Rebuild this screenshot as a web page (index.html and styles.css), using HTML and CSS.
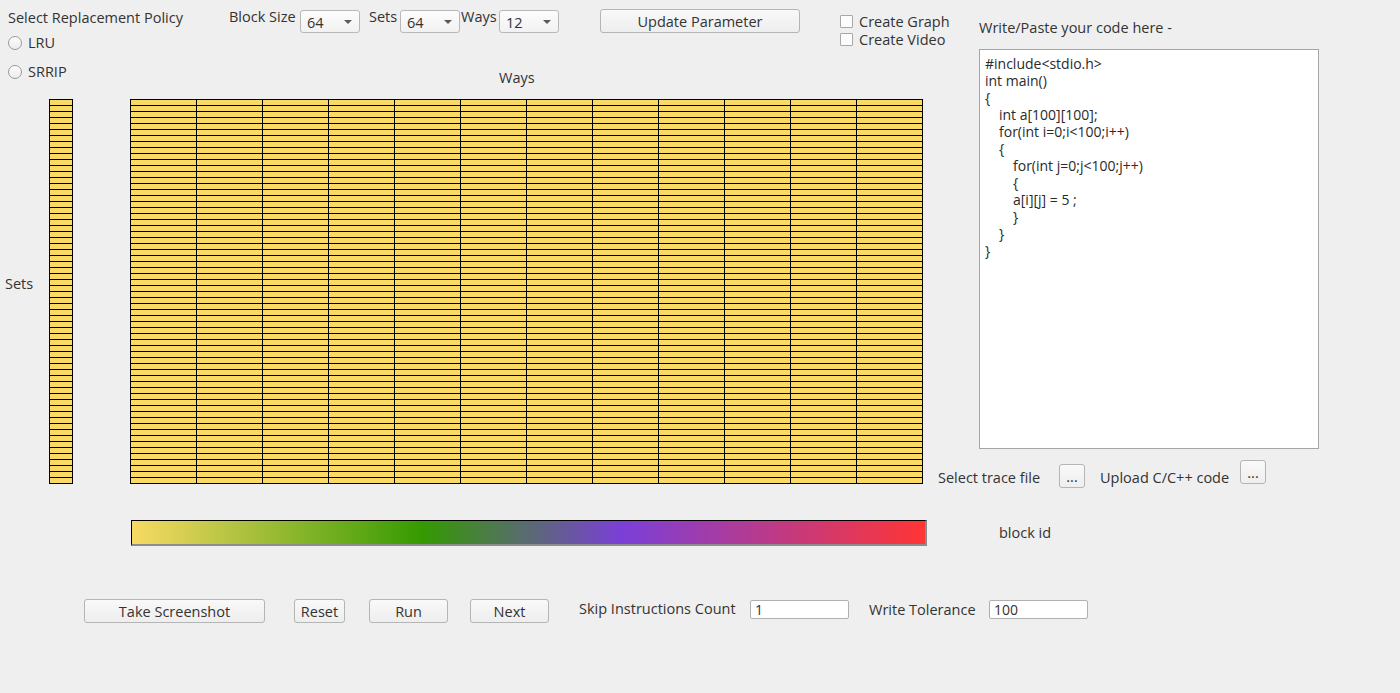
FILE: index.html
```html
<!DOCTYPE html>
<html lang="en">
<head>
<meta charset="utf-8">
<title>Cache Simulator</title>
<link rel="stylesheet" href="styles.css">
</head>
<body>
<div class="window">
  <div class="upper">
    <div class="main">
      <div class="top">
        <div class="policy">
          <div class="title">Select Replacement Policy</div>
          <label class="radio"><span class="rb"></span>LRU</label>
          <label class="radio"><span class="rb"></span>SRRIP</label>
        </div>
        <div class="params">
          <div class="controls">
            <span class="lbl lbl-block">Block Size</span>
            <div class="combo">64<span class="arrow"></span></div>
            <span class="lbl lbl-sets">Sets</span>
            <div class="combo">64<span class="arrow"></span></div>
            <span class="lbl lbl-ways">Ways</span>
            <div class="combo">12<span class="arrow"></span></div>
            <button class="btn update">Update Parameter</button>
            <div class="checks">
              <label class="check"><span class="cb"></span>Create Graph</label>
              <label class="check"><span class="cb"></span>Create Video</label>
            </div>
          </div>
          <div class="axis-ways">Ways</div>
        </div>
      </div>
      <div class="cache">
        <div class="axis-sets">Sets</div>
        <div class="sets-col"></div>
        <div class="ways-grid"></div>
      </div>
    </div>
    <div class="side">
      <div class="code-label">Write/Paste your code here -</div>
      <div class="code">
        <div class="ln">#include&lt;stdio.h&gt;</div>
        <div class="ln">int main()</div>
        <div class="ln">{</div>
        <div class="ln i1">int a[100][100];</div>
        <div class="ln i1">for(int i=0;i&lt;100;i++)</div>
        <div class="ln i1">{</div>
        <div class="ln i2">for(int j=0;j&lt;100;j++)</div>
        <div class="ln i2">{</div>
        <div class="ln i2">a[i][j] = 5 ;</div>
        <div class="ln i2">}</div>
        <div class="ln i1">}</div>
        <div class="ln">}</div>
      </div>
      <div class="trace">
        <span class="lbl lbl-trace">Select trace file</span>
        <button class="btn dots dots-trace">...</button>
        <span class="lbl lbl-upload">Upload C/C++ code</span>
        <button class="btn dots">...</button>
      </div>
    </div>
  </div>
  <div class="legend">
    <div class="bar"></div>
    <span class="lbl legend-label">block id</span>
  </div>
  <div class="actions">
    <button class="btn b-shot">Take Screenshot</button>
    <button class="btn b-reset">Reset</button>
    <button class="btn b-run">Run</button>
    <button class="btn b-next">Next</button>
    <span class="lbl lbl-skip">Skip Instructions Count</span>
    <div class="field">1</div>
    <span class="lbl lbl-tol">Write Tolerance</span>
    <div class="field">100</div>
  </div>
</div>
</body>
</html>
```
FILE: styles.css
```css
html, body {
  margin: 0;
  padding: 0;
  background: #efefef;
}
body {
  font-family: "Open Sans", "Noto Sans", sans-serif;
  font-size: 14.5px;
  color: #333;
}
.window {
  width: 1400px;
  height: 693px;
  overflow: hidden;
}
.upper {
  display: flex;
  height: 488px;
}
.main {
  width: 938px;
  flex: none;
}
.top {
  display: flex;
  height: 99px;
}
.policy {
  width: 229px;
  flex: none;
  box-sizing: border-box;
  padding: 9px 0 0 8px;
}
.title {
  line-height: 18px;
  margin-bottom: 1px;
}
.radio {
  display: flex;
  align-items: center;
  height: 29px;
  gap: 6px;
}
.rb {
  width: 12px;
  height: 12px;
  border: 1px solid #9a9a9a;
  border-radius: 50%;
  background: linear-gradient(#fdfdfd, #ececec);
  flex: none;
}
.params {
  display: flex;
  flex-direction: column;
  padding-top: 8px;
  flex: none;
}
.controls {
  display: flex;
  align-items: flex-start;
  height: 40px;
}
.lbl {
  line-height: 18px;
  white-space: nowrap;
  flex: none;
}
.lbl-block { width: 71px; }
.lbl-sets { width: 31px; margin-left: 9px; }
.lbl-ways { width: 38px; margin-left: 1px; }
.combo {
  position: relative;
  box-sizing: border-box;
  width: 60px;
  height: 23px;
  margin-top: 2px;
  padding: 3px 0 0 6px;
  line-height: 17px;
  border: 1px solid #b8b8b8;
  border-radius: 3px;
  background: linear-gradient(#fcfcfc, #f2f2f2);
  flex: none;
}
.arrow {
  position: absolute;
  right: 7px;
  top: 9px;
  width: 0;
  height: 0;
  border-left: 4px solid transparent;
  border-right: 4px solid transparent;
  border-top: 4px solid #5a5a5a;
}
.btn {
  box-sizing: border-box;
  height: 24px;
  padding: 1px 0 0 0;
  font: inherit;
  color: #333;
  line-height: 20px;
  border: 1px solid #b5b5b5;
  border-radius: 3px;
  background: linear-gradient(#f9f9f9, #eeeeee);
  flex: none;
}
.update {
  width: 200px;
  margin-left: 41px;
  margin-top: 1px;
}
.checks {
  margin-left: 40px;
  margin-top: 4px;
  flex: none;
}
.check {
  display: flex;
  align-items: center;
  height: 18px;
  gap: 6px;
  white-space: nowrap;
}
.cb {
  width: 11px;
  height: 11px;
  border: 1px solid #a8a8a8;
  border-radius: 1px;
  background: #fcfcfc;
  flex: none;
}
.axis-ways {
  margin: 21px 0 0 270px;
  line-height: 18px;
}
.cache {
  display: flex;
  align-items: flex-start;
  height: 385px;
}
.axis-sets {
  width: 49px;
  box-sizing: border-box;
  padding-left: 5px;
  margin-top: 176px;
  line-height: 18px;
  flex: none;
}
.sets-col {
  width: 22px;
  height: 385px;
  border-left: 1px solid #000;
  border-right: 1px solid #000;
  background-color: #f8da64;
  background-image: linear-gradient(to bottom, #000 1px, transparent 1px);
  background-size: 100% 6px;
  flex: none;
}
.ways-grid {
  width: 793px;
  height: 385px;
  margin-left: 57px;
  background-color: #f8da64;
  background-image:
    linear-gradient(to right, #000 1px, transparent 1px),
    linear-gradient(to bottom, #000 1px, transparent 1px);
  background-size: 66px 100%, 100% 6px;
  flex: none;
}
.side {
  flex: 1;
  display: flex;
  flex-direction: column;
}
.code-label {
  margin: 19px 0 0 41px;
  line-height: 18px;
}
.code {
  box-sizing: border-box;
  width: 340px;
  height: 400px;
  margin: 12px 0 0 41px;
  padding: 5px 0 0 5px;
  border: 1px solid #a6a6a6;
  background: #fff;
  font-size: 14px;
  line-height: 17px;
  color: #2a2a2a;
}
.ln { white-space: pre; }
.i1 { padding-left: 14px; }
.i2 { padding-left: 28px; }
.trace {
  display: flex;
  align-items: flex-start;
  margin-top: 11px;
  height: 28px;
}
.lbl-trace { width: 121px; margin-top: 9px; }
.lbl-upload { width: 140px; margin-top: 9px; margin-left: 15px; }
.dots {
  width: 26px;
  line-height: 16px;
}
.dots-trace { margin-top: 4px; }
.legend {
  display: flex;
  align-items: center;
  margin-top: 32px;
  padding-left: 131px;
}
.bar {
  box-sizing: border-box;
  width: 796px;
  height: 26px;
  border-top: 1px solid #000;
  border-left: 1px solid #000;
  border-bottom: 2px solid #8c8c8c;
  border-right: 2px solid #8c8c8c;
  background: linear-gradient(to right, #f8da64 0%, #349a00 36.7%, #7b3fd8 61.8%, #ff3535 100%);
  flex: none;
}
.legend-label { margin-left: 72px; }
.actions {
  display: flex;
  align-items: flex-start;
  margin-top: 53px;
  padding-left: 84px;
}
.b-shot { width: 181px; }
.b-reset { width: 51px; margin-left: 29px; }
.b-run { width: 79px; margin-left: 24px; }
.b-next { width: 79px; margin-left: 22px; }
.lbl-skip { width: 171px; margin-left: 30px; margin-top: 1px; }
.lbl-tol { width: 120px; margin-left: 20px; margin-top: 2px; }
.field {
  box-sizing: border-box;
  width: 99px;
  height: 19px;
  margin-top: 1px;
  padding-left: 4px;
  line-height: 17px;
  border: 1px solid #b0b0b0;
  border-radius: 2px;
  background: #fff;
  font-size: 14px;
  flex: none;
}
```
